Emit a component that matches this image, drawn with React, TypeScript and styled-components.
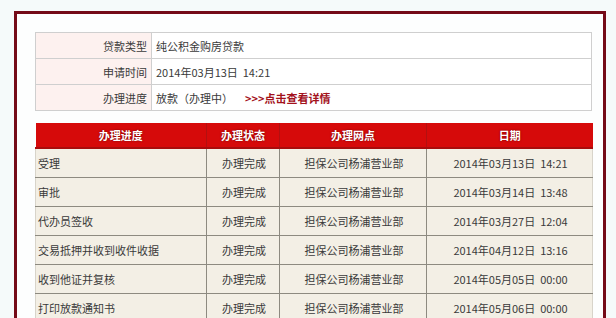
import React from 'react';
import styled, { createGlobalStyle } from 'styled-components';

const GlobalStyle = createGlobalStyle`
  html, body {
    margin: 0;
    padding: 0;
    background: #f5fafa;
    font-family: "Noto Sans CJK SC", "Liberation Sans", sans-serif;
    font-size: 11px;
    color: #3a3a3a;
    overflow: hidden;
  }
`;

type Step = {
  name: string
  status: string
  branch: string
  date: string
}

const steps: Step[] = [
  { name: "受理", status: "办理完成", branch: "担保公司杨浦营业部", date: "2014年03月13日  14:21" },
  { name: "审批", status: "办理完成", branch: "担保公司杨浦营业部", date: "2014年03月14日  13:48" },
  { name: "代办员签收", status: "办理完成", branch: "担保公司杨浦营业部", date: "2014年03月27日  12:04" },
  { name: "交易抵押并收到收件收据", status: "办理完成", branch: "担保公司杨浦营业部", date: "2014年04月12日  13:16" },
  { name: "收到他证并复核", status: "办理完成", branch: "担保公司杨浦营业部", date: "2014年05月05日  00:00" },
  { name: "打印放款通知书", status: "办理完成", branch: "担保公司杨浦营业部", date: "2014年05月06日  00:00" },
];

const App = () => {
  return (
    <>
      <GlobalStyle />
      <Frame>
        <InfoTable>
          <tbody>
            <tr>
              <Label>贷款类型</Label>
              <Value>纯公积金购房贷款</Value>
            </tr>
            <tr>
              <Label>申请时间</Label>
              <Value>2014年03月13日&nbsp;&nbsp;14:21</Value>
            </tr>
            <tr>
              <Label>办理进度</Label>
              <Value>
                放款（办理中）
                <DetailLink href="#">&gt;&gt;&gt;点击查看详情</DetailLink>
              </Value>
            </tr>
          </tbody>
        </InfoTable>

        <ProgressTable>
          <colgroup>
            <col style={{ width: 171 }} />
            <col style={{ width: 73 }} />
            <col style={{ width: 147 }} />
            <col style={{ width: 166 }} />
          </colgroup>
          <thead>
            <tr>
              <Head>办理进度</Head>
              <Head>办理状态</Head>
              <Head>办理网点</Head>
              <Head>日期</Head>
            </tr>
          </thead>
          <tbody>
            {steps.map(s => (
              <tr key={s.name}>
                <Cell $align="left">{s.name}</Cell>
                <Cell>{s.status}</Cell>
                <Cell>{s.branch}</Cell>
                <Cell>{s.date}</Cell>
              </tr>
            ))}
          </tbody>
        </ProgressTable>
      </Frame>
    </>
  );
};

export default App;

const Frame = styled.div`
  margin: 11px 0 0 14px;
  width: 592px;
  height: 307px;
  box-sizing: border-box;
  border: 3px solid #740b18;
  border-bottom: none;
  background: #fdfefe;
  padding: 18px 0 0 18px;
  overflow: hidden;
`;

const InfoTable = styled.table`
  width: 557px;
  border-collapse: collapse;
  border: 1px solid #cfcfcf;
  tr {
    height: 26px;
  }
`;

const Label = styled.td`
  width: 111px;
  padding: 0 4px 0 0;
  text-align: right;
  background: #fdf1ef;
  border: 1px solid #cfcfcf;
`;

const Value = styled.td`
  padding: 0 0 0 4px;
  background: #fff;
  border: 1px solid #cfcfcf;
`;

const DetailLink = styled.a`
  margin-left: 12px;
  color: #a3121c;
  font-weight: bold;
  text-decoration: none;
`;

const ProgressTable = styled.table`
  margin-top: 12px;
  width: 557px;
  table-layout: fixed;
  border-collapse: collapse;
`;

const Head = styled.th`
  height: 24px;
  padding: 0;
  background: #d60a0a;
  border-bottom: 2px solid #a80c0c;
  border-left: 1px solid #b31010;
  color: #fff;
  font-weight: bold;
  text-align: center;
  text-shadow: 0 0 2px #6a0000;
  &:first-child {
    border-left: none;
  }
`;

const Cell = styled.td<{ $align?: string }>`
  height: 28px;
  padding: 0 0 0 2px;
  background: #f3efe5;
  border: 1px solid #8d8a80;
  border-top: none;
  text-align: ${p => p.$align || 'center'};
  white-space: pre;
  &:first-child {
    border-left: 1px solid #d8d4ca;
  }
  &:last-child {
    border-right: 1px solid #d8d4ca;
  }
`;
